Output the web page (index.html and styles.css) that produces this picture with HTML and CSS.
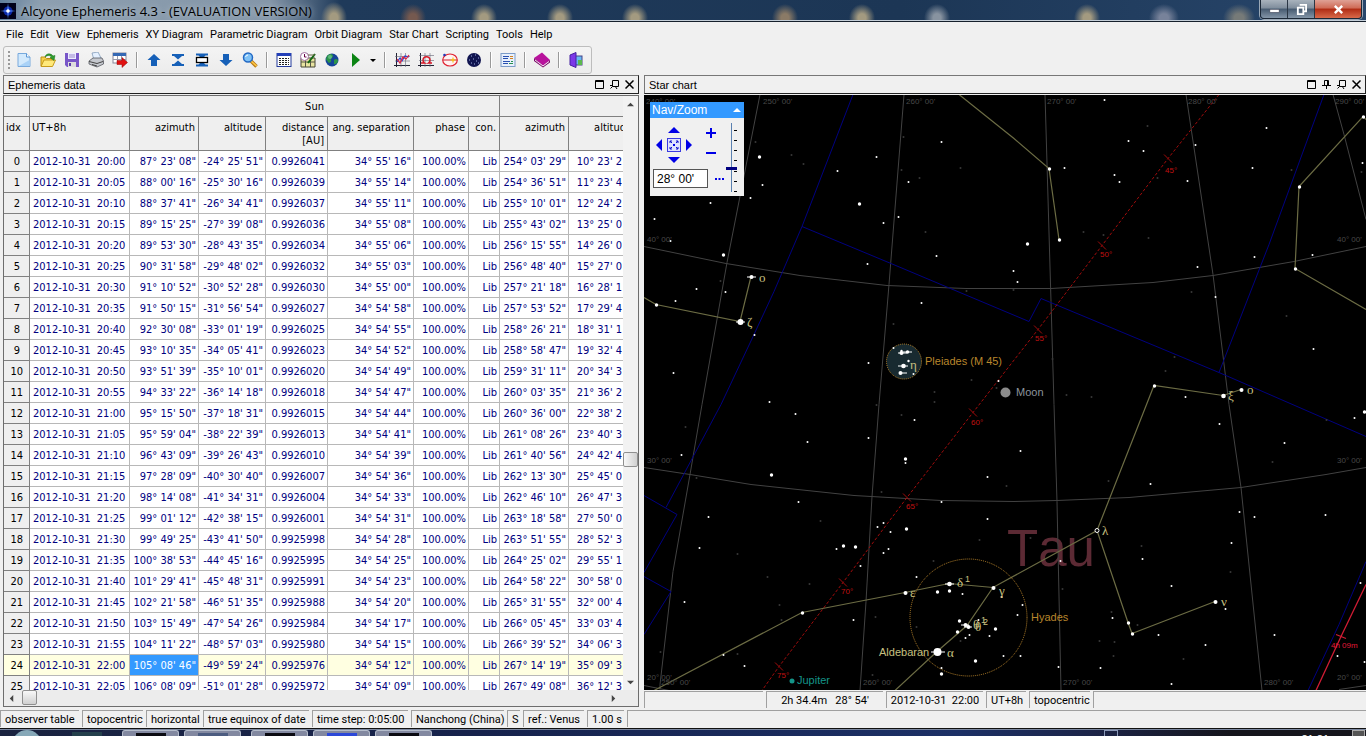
FILE: index.html
```html
<!DOCTYPE html>
<html lang="en">
<head>
<meta charset="utf-8">
<title>Alcyone Ephemeris 4.3</title>
<link rel="stylesheet" href="styles.css">
</head>
<body>
<div class="window">
  <header class="titlebar">
    <svg class="app-icon" viewBox="0 0 16 16"><rect width="16" height="16" fill="#000018"/><circle cx="8" cy="8" r="4.500" fill="#0c28a8"/><path d="M8 0l.8 7.200L16 8l-7.200.8L8 16l-.8-7.200L0 8l7.200-.8z" fill="#5a90ff"/><circle cx="8" cy="8" r="1.800" fill="#fff"/></svg>
    <h1 class="title-text">Alcyone Ephemeris 4.3 - (EVALUATION VERSION)</h1>
    <div class="window-buttons">
      <button class="wb" aria-label="Minimize"><svg viewBox="0 0 12 12"><rect x="1" y="6" width="10" height="3" fill="#fff" stroke="#445" stroke-width=".5"/></svg></button>
      <button class="wb" aria-label="Restore"><svg viewBox="0 0 12 12"><path d="M4 1h7v7H9M2 4h6v7H2z" fill="none" stroke="#fff" stroke-width="2"/></svg></button>
      <button class="wb wb-close" aria-label="Close"><svg viewBox="0 0 12 12"><path d="M2 2l8 8M10 2l-8 8" stroke="#fff" stroke-width="2.6"/></svg></button>
    </div>
  </header>

  <nav class="menubar">
    <button>File</button><button>Edit</button><button>View</button><button>Ephemeris</button><button>XY Diagram</button><button>Parametric Diagram</button><button>Orbit Diagram</button><button>Star Chart</button><button>Scripting</button><button>Tools</button><button>Help</button>
  </nav>

  <div class="toolbar-row">
    <div class="toolbar">
      <span class="grip"></span>
      <button aria-label="New"><svg viewBox="0 0 16 16"><path d="M2 1.500h8.500L14 5v9.500H2z" fill="#d2e9fc" stroke="#78a9dc"/><path d="M10.500 1.500V5H14" fill="#fff" stroke="#5b97d5"/><path d="M3 14h10.500V8z" fill="#a9d2f7"/></svg></button>
      <button aria-label="Open"><svg viewBox="0 0 16 16"><path d="M1 14V5h4l1.500 1.500H12V9" fill="#f5d04a" stroke="#b98d13"/><path d="M1 14.500L4 8h11.500l-3 6.500z" fill="#ffe97a" stroke="#c79a1b"/><path d="M5 5c1-4 6-4 8-1l2-.5-1 5-4-3 1.500-.5C10 3 7.500 3 5 5z" fill="#2f9e2f" stroke="#176b17" stroke-width=".5"/></svg></button>
      <button aria-label="Save"><svg viewBox="0 0 16 16"><path d="M1 1h14v14H3l-2-2z" fill="#7856c8"/><rect x="4" y="1" width="8" height="6" fill="#ececff"/><path d="M5 3h6M5 5h6" stroke="#9a88cc"/><rect x="4" y="10" width="8" height="5" fill="#ddd"/><rect x="5" y="11" width="2" height="3" fill="#5a3aa8"/></svg></button>
      <button aria-label="Print"><svg viewBox="0 0 16 16"><path d="M4 1l6-1 3 6-7 2z" fill="#e4f0ff" stroke="#7590b0" stroke-width=".7"/><path d="M1 9l4-3 9 0 1.500 3v3L9 15l-8-3z" fill="#c5c8ce" stroke="#55585f" stroke-width=".8"/><path d="M1 9.500l8 2 6-2M4 12.500l5 1.500" stroke="#444" fill="none"/></svg></button>
      <button aria-label="Export"><svg viewBox="0 0 16 16"><rect x="1" y="1" width="13" height="10" fill="#fff" stroke="#889"/><rect x="1" y="1" width="13" height="3" fill="#3468b4"/><path d="M1 7.500h13M5.500 4v7M9.500 4v7" stroke="#99a"/><path d="M5 8.500h5V5.500l5.500 5-5.500 5v-3H5z" fill="#e01010" stroke="#900" stroke-width=".5"/></svg></button>
      <span class="sep"></span>
      <button aria-label="Up"><svg viewBox="0 0 16 16"><path d="M8 2l6.500 6H11v6H5V8H1.500z" fill="#1660b8"/></svg></button>
      <button aria-label="First"><svg viewBox="0 0 16 16"><path d="M2 2h12v2h-2L8 7.500 4 4H2zM2 14h12v-2h-2L8 8.500 4 12H2z" fill="#1660b8"/></svg></button>
      <button aria-label="Row"><svg viewBox="0 0 16 16"><path d="M2 1.500h12v2h-2.500L9 6H7L4.500 3.500H2zM2 14.500h12v-2h-2.500L9 10H7l-2.500 2.500H2z" fill="#1660b8"/><rect x="2.500" y="5.500" width="11" height="5" fill="#fff" stroke="#000" stroke-width="1.300"/></svg></button>
      <button aria-label="Down"><svg viewBox="0 0 16 16"><path d="M8 14l6.500-6H11V2H5v6H1.500z" fill="#1660b8"/></svg></button>
      <button aria-label="Search"><svg viewBox="0 0 16 16"><path d="M9 9l5.500 5.500" stroke="#b87a18" stroke-width="3.500"/><path d="M9 9l5.500 5" stroke="#ffc845" stroke-width="1.600"/><circle cx="6" cy="5.500" r="4.500" fill="#7fc2f6" stroke="#2369c4" stroke-width="1.500"/><path d="M3.500 5A3 3 0 0 1 6 3" stroke="#fff" fill="none"/></svg></button>
      <span class="sep"></span>
      <button aria-label="Ephemeris table"><svg viewBox="0 0 16 16"><rect x="1" y="1.500" width="14" height="13" fill="#fff" stroke="#223a9c"/><rect x="1" y="1" width="14" height="3" fill="#2440b8"/><path d="M3 6.500h10M3 8.500h10M3 10.500h10M3 12.500h10" stroke="#222" stroke-dasharray="2 1"/></svg></button>
      <button aria-label="Events"><svg viewBox="0 0 16 16"><path d="M1 15V6h14v9z" fill="#e8e4a0" stroke="#443"/><path d="M1 10h14M5.500 7v8M10.500 7v8" stroke="#554"/><circle cx="4.500" cy="4.500" r="4" fill="#fff" stroke="#a070a0"/><path d="M4.500 2v3h2" stroke="#604" fill="none"/><path d="M8 11l7-9" stroke="#161" stroke-width="2"/><path d="M8 3h7" stroke="#664"/></svg></button>
      <button aria-label="Globe"><svg viewBox="0 0 16 16"><circle cx="8" cy="8" r="6.500" fill="#154498"/><path d="M3 4c3-3 6-2 6 0S6 6 7 8s-2 4-3 2-2-2-2-3zM10 8c2-2 4-1 4 1s-3 4-4 3z" fill="#2c9448"/><circle cx="6" cy="5" r="2" fill="#8fe0b0" opacity=".5"/></svg></button>
      <button aria-label="Run"><svg viewBox="0 0 16 16"><path d="M4 1l8 7-8 7z" fill="#0b8414"/></svg></button>
      <button class="drop" aria-label="Run options"><svg viewBox="0 0 8 16"><path d="M1 7h6L4 10z"/></svg></button>
      <span class="sep"></span>
      <button aria-label="XY diagram"><svg viewBox="0 0 16 16"><path d="M2.500 1v14M0 13.500h16" stroke="#223"/><path d="M1 4.500h15M1 9h15M7 1v14M11.500 1v14" stroke="#667" stroke-width=".6"/><path d="M3 10l3-4 2 3 3-5 4 1" fill="none" stroke="#2440d0" stroke-width="1.200"/><path d="M3 7l3 4 3-6 3 2 3-4" fill="none" stroke="#e02040" stroke-width="1.200"/></svg></button>
      <button aria-label="Parametric diagram"><svg viewBox="0 0 16 16"><path d="M2.500 1v14M0 13.500h16" stroke="#223"/><path d="M1 3.500h15M1 8.500h15M7 1v14M12 1v14" stroke="#667" stroke-width=".6"/><path d="M3 11h3.500a3.500 3.500 0 1 1 4 0H14" fill="none" stroke="#d81828" stroke-width="1.500"/></svg></button>
      <button aria-label="Orbit diagram"><svg viewBox="0 0 16 16"><ellipse cx="8" cy="8" rx="7.300" ry="6" fill="#fff2f2" stroke="#e02030" stroke-width="1.200"/><path d="M1 8h14" stroke="#d02030"/><path d="M11 4.500l.8 2.700 2.700.8-2.700.8-.8 2.700-.8-2.700L7.500 8l2.700-.8z" fill="#f4c21c"/><circle cx="2.500" cy="3" r="1.300" fill="#2038b8"/></svg></button>
      <button aria-label="Star chart"><svg viewBox="0 0 16 16"><circle cx="8" cy="8" r="7" fill="#101450"/><path d="M5 4h1M9 3h1M12 6h1M3 8h1M7 7h1M10 9h1M5 11h1M8 12h1M12 11h1" stroke="#9fb0e0"/></svg></button>
      <span class="sep"></span>
      <button aria-label="Settings"><svg viewBox="0 0 16 16"><rect x="1" y="1.500" width="14" height="13" fill="#e8f0fc" stroke="#7c9cc8"/><path d="M3 4.500h6M3 6.500h5M3 9.500h7M3 11.500h5" stroke="#2850b0"/><path d="M10 4.500h3M10 6.500h3" stroke="#d08020"/><path d="M11 9.500h2M9 11.500h4" stroke="#289050"/></svg></button>
      <span class="sep"></span>
      <button aria-label="Help book"><svg viewBox="0 0 16 16"><path d="M0 6l8-5.500L16 8l-7 6z" fill="#b8129c"/><path d="M0 6v3l9 6.500 7-5V8l-7 6z" fill="#7a0868"/><path d="M1 8l8 6 6-4.500" stroke="#fff" stroke-width=".9" fill="none"/></svg></button>
      <span class="sep"></span>
      <button aria-label="Exit"><svg viewBox="0 0 16 16"><rect x="7" y="4" width="7" height="9" fill="#68b9f4" stroke="#448"/><rect x="10" y="8" width="4" height="5" fill="#5cb84e"/><path d="M2 3l6-2.500v15L2 13z" fill="#7c38e8" stroke="#4520a0"/></svg></button>
    </div>
  </div>

  <main class="workspace">
    <section class="panel">
      <div class="panel-title">
        <h2>Ephemeris data</h2>
        <div class="panel-buttons">
          <button aria-label="Maximize table"><svg viewBox="0 0 9 9"><path d="M.5.500h8v8h-8zM0 1.500h9"/></svg></button>
          <button aria-label="Float table"><svg viewBox="0 0 9 9"><path d="M2.500.500h6v6h-6zM0 5.500h3M2.500 6.500l-2 2M5 6l2 3"/></svg></button>
          <button aria-label="Close table"><svg viewBox="0 0 9 9"><path d="M.5.500l8 8M8.500.500l-8 8" stroke-width="1.500"/></svg></button>
        </div>
      </div>
      <div class="grid-frame">
        <div class="grid-view">
          <table class="ephemeris">
            <colgroup><col class="c-idx"><col class="c-time"><col class="c-az"><col class="c-alt"><col class="c-dist"><col class="c-sep"><col class="c-phase"><col class="c-con"><col class="c-az"><col class="c-alt"></colgroup>
            <thead>
              <tr class="bodies"><th></th><th></th><th colspan="6" class="body-name">Sun</th><th colspan="2"></th></tr>
              <tr class="fields"><th class="left">idx</th><th class="left">UT+8h</th><th>azimuth</th><th>altitude</th><th>distance<br>[AU]</th><th>ang. separation</th><th>phase</th><th>con.</th><th>azimuth</th><th>altitude</th></tr>
            </thead>
            <tbody id="rows"></tbody>
          </table>
        </div>
        <div class="vscroll">
          <button aria-label="Scroll up"><svg viewBox="0 0 8 8"><path d="M0 6l4-4 4 4z"/></svg></button>
          <span class="v-before"></span><span class="thumb v-thumb"></span><span class="v-after"></span>
          <button aria-label="Scroll down"><svg viewBox="0 0 8 8"><path d="M0 2l4 4 4-4z"/></svg></button>
        </div>
        <div class="hscroll">
          <button aria-label="Scroll left"><svg viewBox="0 0 8 8"><path d="M6 0L2 4l4 4z"/></svg></button>
          <span class="thumb h-thumb"></span><span class="h-after"></span>
          <button aria-label="Scroll right"><svg viewBox="0 0 8 8"><path d="M2 0l4 4-4 4z"/></svg></button>
        </div>
      </div>
    </section>

    <section class="panel">
      <div class="panel-title">
        <h2>Star chart</h2>
        <div class="panel-buttons">
          <button aria-label="Maximize chart"><svg viewBox="0 0 9 9"><path d="M.5.500h8v8h-8zM0 1.500h9"/></svg></button>
          <button aria-label="Pin chart"><svg viewBox="0 0 9 9"><path d="M2.500 5V.500h4V5M5.500 0v5M0 5.500h9M4.500 5v4"/></svg></button>
          <button aria-label="Float chart"><svg viewBox="0 0 9 9"><path d="M2.500.500h6v6h-6zM0 5.500h3M2.500 6.500l-2 2M5 6l2 3"/></svg></button>
          <button aria-label="Close chart"><svg viewBox="0 0 9 9"><path d="M.5.500l8 8M8.500.500l-8 8" stroke-width="1.500"/></svg></button>
        </div>
      </div>
      <div class="sky">
        <svg class="chart" viewBox="644 95 722 596" preserveAspectRatio="xMidYMid slice">
          <text class="region" x="1007" y="566">Tau</text>
          <g class="graticule">
            <path d="M760 95L727 263 702 405 690 475 673 572 660 685V690M904 95L889 285 879 405 872 497 866 602 860 691M1045 95L1051 302 1054 405 1057 502 1061 691M1186 95L1213 275 1229 405 1241 488 1262 691M1333 95L1344 135 1366 220"/>
            <path d="M644 247L726 264 800 276 887 286 966 289 1051 289 1153 283 1213 276 1294 262 1366 247M644 468L690 475 751 485 854 496 941 501 1014 502 1057 501 1129 498 1241 488 1326 475 1366 468M644 686L669 691M1339 690L1366 686"/>
          </g>
          <g class="boundary">
            <path d="M853 95L802 227 774 292 754 335 721 405 666 508M644 496L677 515 644 573M644 577L671 592 644 635M802 227L891 264 1029 322 1041 299 1219 373 1366 437M1324 95L1269 245 1219 373M1366 562L1339 625 1308 691"/>
          </g>
          <path class="ecliptic" d="M1219 95L1168 159 1102 246 1038 330 973 413 907 498 843 583 779 667 762 691"/>
          <path class="ticks" d="M1164 155l8 8M1098 242l8 8M1034 326l8 8M969 409l8 8M903 494l8 8M839 579l8 8M775 663l8 8"/>
          <g class="ecl-label"><text x="1165" y="173">45°</text><text x="1100" y="257">50°</text><text x="1035" y="341">55°</text><text x="971" y="425">60°</text><text x="906" y="509">65°</text><text x="841" y="594">70°</text><text x="777" y="678">75°</text></g>
          <path class="equator" d="M1366 585L1341 637 1316 691M1336 635l10 4"/>
          <text class="hour" x="1331" y="648">4h 09m</text>
          <g class="figure">
            <path d="M959 95L1014 139 1049 169 1059 240M644 298L656 305 740 322 751 277M1366 120L1363 117 1299 187 1295 269 1366 310M1241 390L1223 396 1154 386 1097 531 993 588 949 584 905 593 802 613 654 691M1097 531L1128 623 1132 634 1215 602M993 588L967 626 937 652 895 691"/>
          </g>
          <circle class="cluster" cx="968.500" cy="618" r="58.500"/>
          <circle class="cluster filled" cx="904" cy="362" r="17.500"/>
          <g id="stars"></g>
          <path class="dashes" d="M747 277.500h9M736 322.500h9M945 584.500h9M931 652.500h14M961 625.500h8M964 627.500h8M898 366.500h10M898 353.500h9M903 352.500h9M899 373.500h8"/>
          <circle class="ring" cx="1097" cy="531" r="2"/>
          <circle cx="1005.500" cy="393" r="5" fill="#8c8c8c"/>
          <circle cx="792" cy="681.500" r="2.500" fill="#149488"/>
          <g class="degree">
            <text x="646" y="104">240° 00'</text><text x="763" y="104">250° 00'</text><text x="906" y="104">260° 00'</text><text x="1047" y="104">270° 00'</text><text x="1188" y="104">280° 00'</text><text x="1335" y="104">290° 00'</text>
            <text x="647" y="242">40° 00'</text><text x="1337" y="242">40° 00'</text><text x="647" y="463">30° 00'</text><text x="1337" y="463">30° 00'</text><text x="647" y="680">20° 00'</text><text x="1337" y="680">20° 00'</text>
            <text x="661" y="685">250° 00'</text><text x="863" y="685">260° 00'</text><text x="1063" y="685">270° 00'</text><text x="1264" y="685">280° 00'</text>
          </g>
          <g class="greek">
            <text x="759" y="282">ο</text><text x="747" y="326">ζ</text><text x="910" y="369">η</text><text x="1228" y="400">ξ</text><text x="1247" y="394">ο</text><text x="1102" y="535">λ</text><text x="910" y="597">ε</text><text x="957" y="587">δ</text><text x="999" y="595">γ</text><text x="973" y="629">θ</text><text x="975" y="631">θ</text><text x="947" y="657">α</text><text x="1221" y="606">ν</text>
            <text class="sup" x="965" y="582">1</text><text class="sup" x="981" y="623">1</text><text class="sup" x="983" y="625">2</text>
          </g>
          <g class="names">
            <text class="dso" x="925" y="365">Pleiades (M 45)</text><text class="dso" x="1031" y="621">Hyades</text>
            <text class="star-name" x="879" y="656">Aldebaran</text><text class="moon" x="1016" y="396">Moon</text><text class="planet" x="797" y="684">Jupiter</text>
          </g>
        </svg>

        <div class="nav-zoom">
          <div class="nav-head"><span>Nav/Zoom</span><button aria-label="Collapse"><svg viewBox="0 0 8 4"><path d="M0 4l4-4 4 4z" fill="#fff"/></svg></button></div>
          <div class="nav-body">
            <div class="nav-main">
              <div class="nav-top">
                <div class="pad">
                  <button class="p-up" aria-label="Pan up"><svg viewBox="0 0 12 12"><path d="M0 9l6-6 6 6z"/></svg></button>
                  <button class="p-left" aria-label="Pan left"><svg viewBox="0 0 12 12"><path d="M9 0L3 6l6 6z"/></svg></button>
                  <button class="p-mid" aria-label="Center"><svg viewBox="0 0 14 14"><rect x=".5" y=".5" width="13" height="13" fill="#dfe2ff" stroke="#3a3ae0"/><path d="M3 5V3h2M3 3l2 2M9 3h2v2M11 3L9 5M3 9v2h2M3 11l2-2M11 9v2H9M11 11L9 9" fill="none" stroke="#11c"/><rect x="6" y="6" width="2" height="2"/></svg></button>
                  <button class="p-right" aria-label="Pan right"><svg viewBox="0 0 12 12"><path d="M3 0l6 6-6 6z"/></svg></button>
                  <button class="p-down" aria-label="Pan down"><svg viewBox="0 0 12 12"><path d="M0 3l6 6 6-6z"/></svg></button>
                </div>
                <div class="plusminus">
                  <button aria-label="Zoom in"><svg viewBox="0 0 12 12"><path d="M1 5h10v2H1zM5 1h2v10H5z"/></svg></button>
                  <button aria-label="Zoom out"><svg viewBox="0 0 12 12"><path d="M1 5h10v2H1z"/></svg></button>
                </div>
              </div>
              <div class="nav-bottom">
                <input class="fov" type="text" aria-label="Field of view" value="28° 00'">
                <button aria-label="More zoom options"><svg viewBox="0 0 9 2"><path d="M0 0h2v2H0zM3.500 0h2v2h-2zM7 0h2v2H7z"/></svg></button>
              </div>
            </div>
            <input class="zoom" type="range" aria-label="Zoom" min="0" max="100" value="33">
            <div class="scale"><i></i><i></i><i></i><i></i><i></i><i></i><i></i></div>
          </div>
        </div>
      </div>
      <div class="statusbar chart-status"><span class="w119"></span><span class="w117 mid pre">2h 34.4m   28° 54'</span><span class="w97 mid pre">2012-10-31  22:00</span><span class="w40">UT+8h</span><span class="w61">topocentric</span><span class="rest"></span></div>
    </section>
  </main>

  <footer class="statusbar app-status"><span class="w79">observer table</span><span class="w61">topocentric</span><span class="w54">horizontal</span><span class="w106">true equinox of date</span><span class="w96">time step: 0:05:00</span><span class="w93">Nanchong (China)</span><span class="w13">S</span><span class="w61">ref.: Venus</span><span class="w37">1.00 s</span><span class="rest"></span></footer>

  <div class="taskbar">
    <span class="orb"></span><span class="quick"></span>
    <span class="task"><i class="dark"></i></span><span class="task"><i></i></span><span class="task spaced"><i class="dark"></i></span><span class="task"><i class="blue"></i></span><span class="task"><i class="dark"></i></span>
    <span class="tray"></span><time class="clock">21:21</time><span class="desktop"></span>
  </div>
</div>
<script src="app.js"></script>
</body>
</html>
```
FILE: styles.css
```css
* { box-sizing: border-box; }
html, body { height: 100%; }
body {
  margin: 0;
  background: #f0f0f0;
  color: #000;
  font: 11px/14px "DejaVu Sans Condensed", "Noto Sans", sans-serif;
}
button { padding: 0; border: 0; background: none; color: inherit; font: inherit; }
h1, h2 { margin: 0; font: inherit; }
svg { display: block; }

.window { display: flex; flex-direction: column; height: 100vh; overflow: hidden; }

/* Title bar */
.titlebar {
  display: flex;
  align-items: center;
  flex: none;
  height: 22px;
  gap: 5px;
  border-bottom: 1px solid #16202c;
  box-shadow: inset 0 -1px #c4ced8;
  background:
    radial-gradient(ellipse 13px 16px at 334px 18px, #a39a80 30%, transparent),
    radial-gradient(ellipse 13px 14px at 413px 18px, #75594f 30%, transparent),
    radial-gradient(ellipse 13px 14px at 484px 18px, #a39a80 30%, transparent),
    radial-gradient(ellipse 13px 14px at 560px 18px, #a39a80 30%, transparent),
    radial-gradient(ellipse 13px 14px at 635px 18px, #a39a80 30%, transparent),
    radial-gradient(ellipse 13px 14px at 785px 18px, #8a7a66 30%, transparent),
    radial-gradient(ellipse 13px 14px at 862px 18px, #a39a80 30%, transparent),
    radial-gradient(ellipse 13px 14px at 937px 18px, #8893a0 30%, transparent),
    radial-gradient(ellipse 13px 14px at 1087px 18px, #a39a80 30%, transparent),
    radial-gradient(ellipse 15px 14px at 1164px 18px, #77829a 30%, transparent),
    radial-gradient(ellipse 16px 14px at 1239px 18px, #767a78 30%, transparent),
    linear-gradient(90deg, #62809c 0, #8d9fb0 40px, #8496a8 270px, #1f3a5a 340px, #1c3655 900px, #28466b 1366px);
}
.app-icon { width: 16px; height: 16px; }
.title-text { flex: 1; font: 13px/20px "Open Sans", "Noto Sans", sans-serif; white-space: nowrap; text-shadow: 0 0 6px #c5d0da; }
.window-buttons {
  display: flex;
  align-self: flex-start;
  height: 19px;
  margin-right: 4px;
  border: 1px solid #1a2736;
  border-top: 0;
  border-radius: 0 0 4px 4px;
  overflow: hidden;
  box-shadow: 0 0 0 1px #9aa8b6;
}
.wb { display: grid; place-items: center; width: 27px; border-right: 1px solid #2a3644; background: linear-gradient(#a9b3bd, #7f8d9c 45%, #465a70 50%, #8496a8); }
.wb svg { width: 11px; height: 11px; }
.wb-close { width: 46px; border: 0; background: linear-gradient(#dfa195, #cf6a55 45%, #b02c14 50%, #d86a4a); }

/* Menu and toolbar */
.menubar { display: flex; flex: none; gap: 7px; height: 24px; padding: 1px 0 0 6px; align-items: center; font: 11px/14px Roboto, "Liberation Sans", sans-serif; }
.toolbar-row { flex: none; padding: 0 3px 1px; }
.toolbar {
  display: flex;
  align-items: center;
  gap: 8px;
  width: max-content;
  height: 28px;
  padding: 0 7px 0 4px;
  border: 1px solid #bdbdbd;
  border-radius: 3px;
  background: linear-gradient(#f4f4f4, #ececec);
}
.toolbar button, .toolbar svg { width: 16px; height: 16px; }
.toolbar .drop { width: 12px; margin-left: -8px; padding-left: 5px; }
.toolbar .drop svg { width: 8px; }
.grip { width: 2px; height: 18px; margin-right: -2px; background: repeating-linear-gradient(#999 0 2px, transparent 2px 4px); }
.sep { width: 2px; height: 16px; border-left: 1px solid #999; border-right: 1px solid #fff; }

/* Panels */
.workspace { display: grid; grid-template-columns: 636fr 722fr; gap: 5px; flex: 1; min-height: 0; padding-left: 3px; }
.panel { display: flex; flex-direction: column; min-width: 0; min-height: 0; }
.panel-title {
  display: flex;
  flex: none;
  align-items: center;
  justify-content: space-between;
  height: 19px;
  margin-bottom: 1px;
  padding: 0 4px;
  border: 1px solid #777;
  border-right-color: #222;
  border-bottom-color: #222;
}
.panel-title h2 { padding-top: 1px; font: 11px/16px "Liberation Sans", sans-serif; }
.panel-buttons { display: flex; gap: 6px; }
.panel-buttons svg { width: 9px; height: 9px; fill: none; stroke: #000; }

/* Ephemeris grid */
.grid-frame {
  display: grid;
  grid-template: minmax(0, 1fr) 16px / minmax(0, 1fr) 15px;
  flex: 1;
  min-height: 0;
  margin-bottom: 1px;
  border: 1px solid #6d6d6d;
}
.grid-view { overflow: hidden; background: #fff; }
.ephemeris { width: 632px; table-layout: fixed; border-collapse: separate; border-spacing: 0; }
.c-idx { width: 26px; }
.c-time { width: 100px; }
.c-az { width: 69px; }
.c-alt { width: 67px; }
.c-dist { width: 62px; }
.c-sep { width: 86px; }
.c-phase { width: 55px; }
.c-con { width: 31px; }
.ephemeris th { padding: 0 3px; border: solid #808080; border-width: 0 1px 1px 0; background: #efefef; font-weight: normal; text-align: right; white-space: nowrap; }
.bodies th { height: 21px; }
.ephemeris .body-name { padding-top: 1px; text-align: center; }
.fields th { height: 34px; padding-top: 4px; line-height: 13px; vertical-align: top; }
.ephemeris .left { text-align: left; padding-left: 2px; }
.ephemeris td { height: 21px; padding: 2px 2px 0; border: solid #b8b8b8; border-width: 0 1px 1px 0; color: #000080; text-align: right; white-space: pre; }
.ephemeris tbody th { padding: 2px 9px 0 0; }
.ephemeris tbody .wide-idx { padding-right: 6px; }
.ephemeris .time { text-align: left; padding-left: 3px; }
.ephemeris .cut { padding-right: 13px; }
.current th, .current td { background: #ffffe1; }
.current .cell { background: #3399ff; color: #fff; }

.vscroll, .hscroll { display: flex; background: #ececec; }
.vscroll { flex-direction: column; background: #f2f2f2; }
.hscroll { grid-column: 1 / 3; }
.vscroll button, .hscroll button { display: grid; place-items: center; width: 15px; height: 16px; }
.vscroll svg, .hscroll svg { width: 7px; height: 7px; fill: #444; }
.hscroll { padding-right: 17px; }
.thumb { border: 1px solid #8f8f8f; border-radius: 2px; }
.v-before { flex: 341; }
.v-after { flex: 208; }
.v-thumb { height: 15px; background: linear-gradient(90deg, #f8f8f8, #d0d0d0); }
.h-thumb { width: 15px; margin: 0 0 1px 3px; background: linear-gradient(#f8f8f8, #d0d0d0); }
.h-after { flex: 1; }

/* Star chart */
.sky { position: relative; flex: 1; min-height: 0; overflow: hidden; background: #000; }
.chart { width: 100%; height: 100%; font-family: "Liberation Sans", sans-serif; }
.graticule path { fill: none; stroke: #424242; }
.boundary path { fill: none; stroke: #000080; }
.ecliptic { fill: none; stroke: #a00c0c; stroke-dasharray: 3 2; }
.ticks { stroke: #a00c0c; }
.equator { fill: none; stroke: #d01c34; stroke-width: 1.3; }
.hour { fill: #e01838; font-size: 8px; }
.ecl-label { fill: #c01010; font-size: 8px; }
.figure path { fill: none; stroke: #6c6c44; stroke-width: 1.2; }
.cluster { fill: none; stroke: #b8842c; stroke-dasharray: 1 1; }
.cluster.filled { fill: #182a30; }
.region { fill: #5c2a34; font-size: 51px; font-kerning: none; }
.bright, .small { fill: #fff; }
.faint { fill: #383838; }
.dashes { stroke: #fff; }
.ring { fill: #000; stroke: #fff; }
.degree { fill: #484848; font-size: 8px; }
.greek { fill: #c8c080; font-family: "Liberation Serif", serif; font-size: 13px; }
.greek .sup { font-family: "Liberation Sans", sans-serif; font-size: 9px; }
.names { font-size: 11px; }
.dso { fill: #b8862c; }
.star-name { fill: #c8c080; }
.moon { fill: #8c949c; }
.planet { fill: #149488; }

/* Navigation palette floating over the chart */
.nav-zoom { position: absolute; top: 7px; left: 6px; width: 94px; background: #f0f0f0; }
.nav-head { display: flex; align-items: center; justify-content: space-between; height: 16px; padding: 0 3px 0 2px; background: #3399ff; color: #fff; font: 12px/16px "Liberation Sans", sans-serif; }
.nav-head svg { width: 8px; height: 4px; }
.nav-body { display: flex; height: 78px; padding: 5px 3px 3px; }
.nav-main { width: 73px; }
.nav-main svg { fill: #0000e6; }
.nav-top { display: flex; justify-content: space-between; padding: 1px 9px 0 0; }
.pad { display: grid; grid-template-columns: 12px 14px 12px; grid-template-rows: 12px 14px 12px; gap: 2px; place-items: center; }
.pad svg { width: 12px; height: 12px; }
.p-up { grid-area: 1 / 2; }
.p-left { grid-area: 2 / 1; }
.p-mid { grid-area: 2 / 2; }
.p-right { grid-area: 2 / 3; }
.p-down { grid-area: 3 / 2; }
.pad .p-mid svg { width: 14px; height: 14px; }
.plusminus { display: flex; flex-direction: column; gap: 8px; padding-top: 3px; }
.plusminus svg { width: 12px; height: 12px; }
.nav-bottom { display: flex; gap: 7px; align-items: center; padding-top: 3px; }
.nav-bottom svg { width: 9px; height: 2px; }
.fov { width: 55px; height: 19px; padding: 0 3px; border: 1px solid #555; background: #fff; font: 12px/16px "Liberation Sans", sans-serif; }
.zoom { appearance: none; width: 11px; height: 69px; margin: 0; writing-mode: vertical-lr; direction: rtl; background: linear-gradient(#5a80b0, #5a80b0) center / 1px 100% no-repeat; }
.zoom::-webkit-slider-thumb { appearance: none; width: 11px; height: 3px; background: #000080; }
.scale { display: flex; flex-direction: column; justify-content: space-between; width: 3px; height: 62px; margin-top: 7px; margin-left: -3px; }
.scale i { width: 3px; height: 1px; background: #000; }

/* Status bars */
.statusbar { display: flex; flex: none; gap: 3px; height: 17px; font: 11px/18px Roboto, "Liberation Sans", sans-serif; white-space: nowrap; }
.statusbar span { flex: none; padding-left: 4px; border: solid #a0a0a0; border-width: 1px 0 0 1px; }
.chart-status { margin-top: 1px; }
.app-status { margin: 2px 0 1px; }
.statusbar .pre { white-space: pre; }
.statusbar .mid { padding: 0; text-align: center; }
.w13 { width: 13px; }
.w37 { width: 37px; }
.w40 { width: 40px; }
.w54 { width: 54px; }
.w61 { width: 61px; }
.w79 { width: 79px; }
.w93 { width: 93px; }
.w96 { width: 96px; }
.w97 { width: 97px; }
.w106 { width: 106px; }
.w117 { width: 117px; }
.w119 { width: 119px; }
.statusbar .rest { flex: 1; }

/* Taskbar */
.taskbar { display: flex; flex: none; height: 8px; gap: 5px; overflow: hidden; border-top: 1px solid #111; box-shadow: inset 0 1px #7c88a0; background: linear-gradient(90deg, #1a2340, #16224c 35%, #1c3066 70%, #1c2448 80%, #15151c 90%); }
.orb { width: 30px; height: 30px; margin: 1px 25px 0 12px; border-radius: 15px; background: #86a8b8; }
.quick { width: 30px; margin: 3px 15px 0 0; background: #24404c; }
.task { display: flex; justify-content: center; width: 57px; margin-top: 1px; border: 1px solid #b4bccb; border-bottom: 0; border-radius: 3px 3px 0 0; background: #8288a0; }
.task.spaced { margin-left: 5px; }
.task i { width: 30px; margin-top: 2px; background: #4c5c80; }
.task .dark { background: #0b0b12; }
.task .blue { background: #2c48d8; }
.tray { width: 14px; margin: 1px 178px 0 auto; border: 1px solid #8a98b8; border-bottom: 0; }
.clock { padding-top: 3px; color: #fff; font: 11px/14px "Liberation Sans", sans-serif; }
.desktop { width: 13px; margin: 1px 1px 0 18px; border: 1px solid #aaa; border-bottom: 0; background: #555; }
```
FILE: app.js
```js
// azimuth | altitude | distance | angular separation | azimuth | altitude
const data = `87° 23' 08"|-24° 25' 51"|0.9926041|34° 55' 16"|254° 03' 29"|10° 23' 2
88° 00' 16"|-25° 30' 16"|0.9926039|34° 55' 14"|254° 36' 51"|11° 23' 4
88° 37' 41"|-26° 34' 41"|0.9926037|34° 55' 11"|255° 10' 01"|12° 24' 2
89° 15' 25"|-27° 39' 08"|0.9926036|34° 55' 08"|255° 43' 02"|13° 25' 0
89° 53' 30"|-28° 43' 35"|0.9926034|34° 55' 06"|256° 15' 55"|14° 26' 0
90° 31' 58"|-29° 48' 02"|0.9926032|34° 55' 03"|256° 48' 40"|15° 27' 0
91° 10' 52"|-30° 52' 28"|0.9926030|34° 55' 00"|257° 21' 18"|16° 28' 1
91° 50' 15"|-31° 56' 54"|0.9926027|34° 54' 58"|257° 53' 52"|17° 29' 4
92° 30' 08"|-33° 01' 19"|0.9926025|34° 54' 55"|258° 26' 21"|18° 31' 1
93° 10' 35"|-34° 05' 41"|0.9926023|34° 54' 52"|258° 58' 47"|19° 32' 4
93° 51' 39"|-35° 10' 01"|0.9926020|34° 54' 49"|259° 31' 11"|20° 34' 3
94° 33' 22"|-36° 14' 18"|0.9926018|34° 54' 47"|260° 03' 35"|21° 36' 2
95° 15' 50"|-37° 18' 31"|0.9926015|34° 54' 44"|260° 36' 00"|22° 38' 2
95° 59' 04"|-38° 22' 39"|0.9926013|34° 54' 41"|261° 08' 26"|23° 40' 3
96° 43' 09"|-39° 26' 43"|0.9926010|34° 54' 39"|261° 40' 56"|24° 42' 4
97° 28' 09"|-40° 30' 40"|0.9926007|34° 54' 36"|262° 13' 30"|25° 45' 0
98° 14' 08"|-41° 34' 31"|0.9926004|34° 54' 33"|262° 46' 10"|26° 47' 3
99° 01' 12"|-42° 38' 15"|0.9926001|34° 54' 31"|263° 18' 58"|27° 50' 0
99° 49' 25"|-43° 41' 50"|0.9925998|34° 54' 28"|263° 51' 55"|28° 52' 3
100° 38' 53"|-44° 45' 16"|0.9925995|34° 54' 25"|264° 25' 02"|29° 55' 1
101° 29' 41"|-45° 48' 31"|0.9925991|34° 54' 23"|264° 58' 22"|30° 58' 0
102° 21' 58"|-46° 51' 35"|0.9925988|34° 54' 20"|265° 31' 55"|32° 00' 4
103° 15' 49"|-47° 54' 26"|0.9925984|34° 54' 17"|266° 05' 45"|33° 03' 4
104° 11' 22"|-48° 57' 03"|0.9925980|34° 54' 15"|266° 39' 52"|34° 06' 3
105° 08' 46"|-49° 59' 24"|0.9925976|34° 54' 12"|267° 14' 19"|35° 09' 3
106° 08' 09"|-51° 01' 28"|0.9925972|34° 54' 09"|267° 49' 08"|36° 12' 3`.split("\n");

const CURRENT = 24;
const pad = n => String(n).padStart(2, "0");

document.getElementById("rows").innerHTML = data.map((line, i) => {
  const [az, alt, dist, sep, az2, alt2] = line.split("|");
  const min = 20 * 60 + i * 5;
  const time = `2012-10-31  ${pad(Math.floor(min / 60))}:${pad(min % 60)}`;
  return `<tr${i === CURRENT ? ' class="current"' : ""}><th${i > 9 ? ' class="wide-idx"' : ""}>${i}</th>` +
    `<td class="time">${time}</td><td${i === CURRENT ? ' class="cell"' : ""}>${az}</td><td>${alt}</td><td>${dist}</td>` +
    `<td>${sep}</td><td>100.00%</td><td>Lib</td><td>${az2}</td><td class="cut">${alt2}</td></tr>`;
}).join("");

// Stars: x,y[,radius]
const stars = {
  bright: `759,157 859,204 723,255 751,277,2 740,322,3 656,305 1049,169 1059,240 1027,244 1299,187 1295,269 1363,117
    1154,386 1223,396,2.3 1241,390,2 771,475 905,459 906,529 843,546 855,547 905,593,2 802,613 993,588,2 949,584,2.3
    937,652,4 965,625,2 968,627,2 937,592 949,591 959,621 957,632 995,629 975,661 941,674 1128,623 1132,634 1215,602,2
    1364,412 903,366,2.3 901,353,2 907,352 900,373,2 908,361,1.2 901,351,1.2`,
  small: `876,157 941,142 837,171 908,182 762,185 750,198 710,203 654,219 670,241 898,217 883,223 936,256 867,264
    696,289 725,292 675,301 1013,271 921,303 754,335 893,348 868,363 913,374 998,381 673,373 769,402 1104,100
    1128,141 1143,151 1064,168 1114,175 1119,182 1195,145 1187,181 1266,128 1252,168 1362,163 1017,282 1197,267
    1254,257 1312,255 1215,297 1313,349 1185,397 795,414 914,420 807,442 868,438 681,455 905,463 987,477 798,502
    708,517 941,502 987,519 883,523 877,527 890,532 888,549 883,553 836,549 699,548 860,566 916,577 962,594
    1001,597 684,602 853,620 965,638 969,635 989,636 1003,656 941,668 723,655 744,666 978,620 1219,424 1020,451
    1284,443 1354,418 1150,484 1239,512 1254,517 1325,515 1231,543 1142,559 1171,586 1060,561 1225,609 1112,618
    1158,635 1205,645 1274,635 1100,668 1058,667 1020,656 1022,605 1017,615 1171,684 1360,583 1337,656 1364,662`,
  faint: `755,142 791,155 803,164 903,137 901,170 919,178 960,168 925,232 720,281 893,324 971,380 934,392 996,388
    966,291 1147,126 1083,232 1103,235 1148,238 1157,178 1291,170 1361,172 1013,290 1191,292 1286,316 1052,359
    1174,357 1165,371 1066,395 1091,397 685,427 876,405 901,415 881,492 1006,486 820,521 737,554 767,577 809,584
    979,540 933,561 779,605 781,620 875,617 916,627 737,654 660,652 960,641 934,402 872,675 696,478 1108,481
    1272,462 1030,538 1141,546 1230,572 1062,589 1111,612 1099,641 1114,642 1183,659 1326,420 1137,625 1113,656`
};
const radius = { bright: 1.7, small: 1, faint: 1 };

document.getElementById("stars").innerHTML = Object.entries(stars).map(([kind, list]) =>
  list.trim().split(/\s+/).map(s => {
    const [x, y, r] = s.split(",").map(Number);
    return `<circle class="${kind}" cx="${x + 0.5}" cy="${y + 0.5}" r="${r || radius[kind]}"/>`;
  }).join("")
).join("");
```
